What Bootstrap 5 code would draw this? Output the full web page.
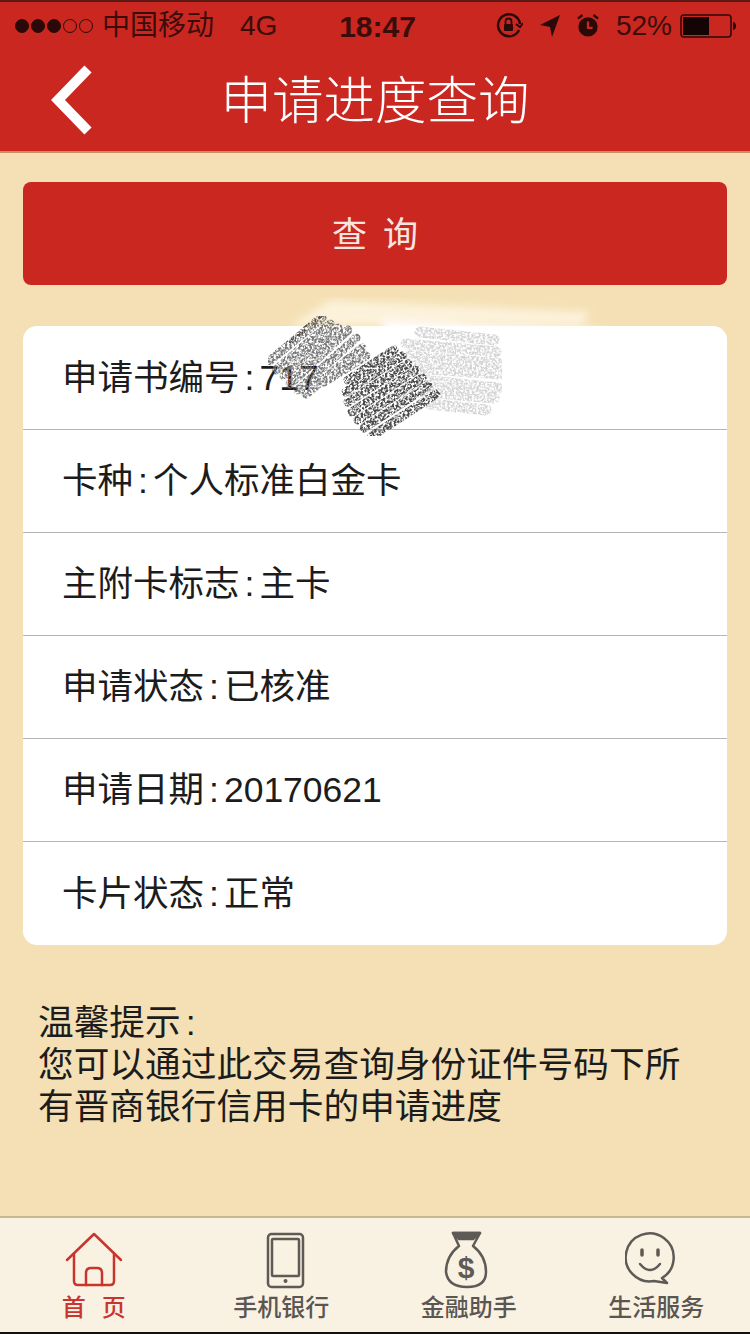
<!DOCTYPE html>
<html lang="zh-CN">
<head>
    <meta charset="UTF-8">
    <meta name="viewport" content="width=device-width, initial-scale=1">
    <title>申请进度查询</title>
    <link rel="stylesheet" href="https://cdn.jsdelivr.net/npm/bootstrap@5.3.0/dist/css/bootstrap.min.css">
    <style>
        html, body { height: 1334px; overflow: hidden; }
        body {
            font-family: "Liberation Sans", "Noto Sans CJK SC", sans-serif;
            background: #f4e0b4;
            color: #1c1c1c;
        }
        .phone-page { height: 1334px; border-bottom: 2px solid #111; }
        .app-head { background: #c9271f; border-top: 2px solid #5b1a16; border-bottom: 2px solid #c98e64; height: 153px; flex: none; }
        .status-line { height: 48px; padding: 0 14px 0 15px; font-size: 28px; color: #3a0d0b; display: grid; grid-template-columns: 1fr auto 1fr; align-items: center; }
        .status-time { font-size: 30px; font-weight: 700; margin-left: 4px; }
        .dot-row { gap: 2px; margin-right: 9px; }
        .dot-on, .dot-off { width: 14px; height: 14px; border-radius: 50%; border: 1.5px solid #2a0a08; }
        .dot-on { background: #2a0a08; }
        .carrier-net { margin-left: 26px; }
        .pct-text { margin-left: 17px; margin-right: 8px; }
        .title-line { display: grid; grid-template-columns: 1fr auto 1fr; align-items: center; height: 100px; color: #fff; }
        .title-text { font-size: 51.5px; line-height: 1; margin-top: 3px; font-weight: 300; }
        .back-arrow { margin-left: 48px; }
        .query-btn { background: #c9271f; color: #f7e6e0; height: 103px; margin: 29px 23px 0; border-radius: 8px; font-size: 35px; letter-spacing: 16px; padding: 4px 0 0 16px; width: 704px; border: 0; flex: none; }
        .info-box { margin: 41px 23px 0; padding-top: 1px; border-radius: 14px; background: #fff; height: 619px; flex: none; }
        .info-row { height: 103px; padding: 2px 0 0 39px; font-size: 35.5px; border-bottom: 1px solid #b5b5b5; }
        .info-row:last-child { border-bottom: 0; }
        .cn-colon { margin: 0 5px; }
        .scribble { position: absolute; left: 207px; top: -36px; pointer-events: none; }
        .notice { margin: 57px 38px 0; font-size: 35.7px; line-height: 42px; }
        .tabbar { height: 116px; background: #f9f1e2; border-top: 2px solid #c7b98f; margin-top: auto; flex: none; }
        .tab-item { flex: 1 1 0; color: #5a5652; font-size: 24px; font-weight: 500; line-height: 28px; padding-top: 2px; }
        .tab-item svg { display: block; height: 60px; margin-bottom: 3px; }
        .tab-home { color: #c9352c; }
        .tab-home span { letter-spacing: 16px; margin-right: -16px; }
        .tab-item .icon-phone { margin-left: 10px; }
        .tab-item .icon-bag { margin-right: 6px; }
        .tab-item .icon-face { margin-right: 10px; }
    </style>
</head>
<body>
    <div class="phone-page d-flex flex-column">
        <!-- 顶部 -->
        <header class="app-head">
            <div class="status-line">
                <div class="d-flex align-items-center">
                    <span class="d-flex dot-row">
                        <i class="dot-on"></i><i class="dot-on"></i><i class="dot-on"></i><i class="dot-off"></i><i class="dot-off"></i>
                    </span>
                    <span>中国移动</span><span class="carrier-net">4G</span>
                </div>
                <div class="status-time">18:47</div>
                <div class="d-flex align-items-center justify-content-end">
                    <svg width="28" height="28" viewBox="0 0 28 28" fill="none" stroke="#2a0a08" stroke-width="2.4"><path d="M24 18a11 11 0 1 1 1-6"/><path d="M21 12l4 3 3-4" stroke-width="2"/><rect x="9" y="12" width="9" height="7" rx="1" fill="#2a0a08" stroke="none"/><path d="M10.500 12V9.500a3 3 0 0 1 6 0V12" stroke-width="1.800"/></svg>
                    <svg class="ms-3" width="22" height="24" viewBox="0 0 22 24"><path d="M21 1L1 11l10 2 2 10z" fill="#2a0a08"/></svg>
                    <svg class="ms-3" width="22" height="24" viewBox="0 0 24 26"><circle cx="12" cy="14" r="10.500" fill="#2a0a08"/><path d="M12 8v7h5" stroke="#c9271f" stroke-width="2.500" fill="none"/><path d="M1 5l5-4M23 5l-5-4" stroke="#2a0a08" stroke-width="2.500"/></svg>
                    <span class="pct-text">52%</span>
                    <svg width="56" height="24" viewBox="0 0 56 24"><rect x="1" y="1" width="50" height="22" rx="3" fill="none" stroke="#2a0a08" stroke-width="1.500"/><rect x="3" y="3" width="26" height="18" fill="#140504"/><path d="M53 8c2 0 3 2 3 4s-1 4-3 4z" fill="#2a0a08"/></svg>
                </div>
            </div>
            <div class="title-line">
                <svg class="back-arrow" width="48" height="72" viewBox="0 0 48 72" fill="none" stroke="#fff" stroke-width="10"><path d="M40 5L10 36l30 31" stroke-linejoin="miter"/></svg>
                <div class="title-text">申请进度查询</div>
                <div></div>
            </div>
        </header>

        <button type="button" class="btn query-btn">查询</button>

        <!-- 申请信息 -->
        <div class="info-box position-relative">
            <svg class="scribble" width="400" height="160" viewBox="0 0 400 160">
                <defs>
                    <filter id="grain" x="0" y="0" width="100%" height="100%">
                        <feTurbulence type="fractalNoise" baseFrequency="0.45" numOctaves="4" seed="9" result="n"/>
                        <feColorMatrix in="n" type="matrix" values="0 0 0 0 0  0 0 0 0 0  0 0 0 0 0  0 0 0 3.500 -1.200" result="m"/>
                        <feComposite in="SourceGraphic" in2="m" operator="in"/>
                        <feGaussianBlur stdDeviation=".7"/>
                    </filter>
                    <filter id="soft"><feGaussianBlur stdDeviation="4"/></filter>
                </defs>
                <!-- 白色涂抹 -->
                <path d="M100 10L360 22 352 36 250 34 60 36z" fill="#fff8e8" opacity=".75" filter="url(#soft)"/>
                <path d="M150 30L370 40V130L200 125z" fill="#fff" filter="url(#soft)"/>
                <g filter="url(#grain)" fill="none" stroke-linecap="round">
                    <g stroke="#d4d4d4" stroke-width="11">
                        <path d="M190 42l74 8M176 54l90 8M180 66l92 8M186 78l84 6M190 90l78 8M194 102l70 6M200 114l56 6"/>
                    </g>
                    <g stroke="#777" stroke-width="9">
                        <path d="M92 28L38 72M100 34L46 80M108 38L54 86M118 40L60 94M126 48L68 100M132 58L76 104M136 66L94 92"/>
                    </g>
                    <path d="M90 26L60 52" stroke="#55504a" stroke-width="5"/>
                    <g stroke="#4a4a4a" stroke-width="9">
                        <path d="M164 60L118 90M172 66L116 102M178 74L118 112M186 80L122 122M192 88L128 130M198 96L134 138M206 104L142 146"/>
                    </g>
                </g>
            </svg>
            <div class="info-row d-flex align-items-center">申请书编号<span class="cn-colon">:</span>717</div>
            <div class="info-row d-flex align-items-center">卡种<span class="cn-colon">:</span>个人标准白金卡</div>
            <div class="info-row d-flex align-items-center">主附卡标志<span class="cn-colon">:</span>主卡</div>
            <div class="info-row d-flex align-items-center">申请状态<span class="cn-colon">:</span>已核准</div>
            <div class="info-row d-flex align-items-center">申请日期<span class="cn-colon">:</span>20170621</div>
            <div class="info-row d-flex align-items-center">卡片状态<span class="cn-colon">:</span>正常</div>
        </div>

        <div class="notice">温馨提示<span class="cn-colon">:</span><br>您可以通过此交易查询身份证件号码下所<br>有晋商银行信用卡的申请进度</div>

        <!-- 底部导航 -->
        <nav class="tabbar d-flex">
            <div class="tab-item tab-home d-flex flex-column align-items-center justify-content-center">
                <svg width="58" height="60" viewBox="0 0 58 60" fill="none" stroke="#c9352c" stroke-width="2.500" stroke-linejoin="round" stroke-linecap="round"><path d="M2 29L29 3l27 26"/><path d="M9 23v27q0 4 4 4h32q4 0 4-4V23"/><path d="M21 54V42q0-5 5-5h6q5 0 5 5v12"/></svg>
                <span>首页</span>
            </div>
            <div class="tab-item d-flex flex-column align-items-center justify-content-center">
                <svg class="icon-phone" width="40" height="60" viewBox="0 0 40 60" fill="none" stroke="#5f5a56" stroke-width="2.500"><rect x="2" y="3" width="35" height="53" rx="3.500"/><rect x="6" y="8" width="27" height="37" rx="1"/><circle cx="19.500" cy="50" r="2" fill="#5f5a56" stroke="none"/></svg>
                手机银行
            </div>
            <div class="tab-item d-flex flex-column align-items-center justify-content-center">
                <svg class="icon-bag" width="44" height="60" viewBox="0 0 44 60" fill="none" stroke="#5f5a56" stroke-width="2.500" stroke-linejoin="round"><path d="M9 2h27l-7 13q13 10 13 26 0 15-19 15T2 41q0-16 13-26z"/><path d="M9 2h27l-7 6H15z" fill="#5f5a56"/><text x="22" y="47" text-anchor="middle" font-size="30" font-weight="700" fill="#5f5a56" stroke="none" font-family="Liberation Sans">$</text></svg>
                金融助手
            </div>
            <div class="tab-item d-flex flex-column align-items-center justify-content-center">
                <svg class="icon-face" width="52" height="60" viewBox="0 0 52 60" fill="none" stroke="#5f5a56" stroke-width="2.500" stroke-linecap="round" stroke-linejoin="round"><path d="M37 47A24 24 0 1 0 29 50L42 52z"/><path d="M15 33q10 12 20 0"/><path d="M17 19v5M33 19v5" stroke-width="3.500"/></svg>
                生活服务
            </div>
        </nav>
    </div>
    <script src="https://cdn.jsdelivr.net/npm/bootstrap@5.3.0/dist/js/bootstrap.bundle.min.js"></script>
</body>
</html>
